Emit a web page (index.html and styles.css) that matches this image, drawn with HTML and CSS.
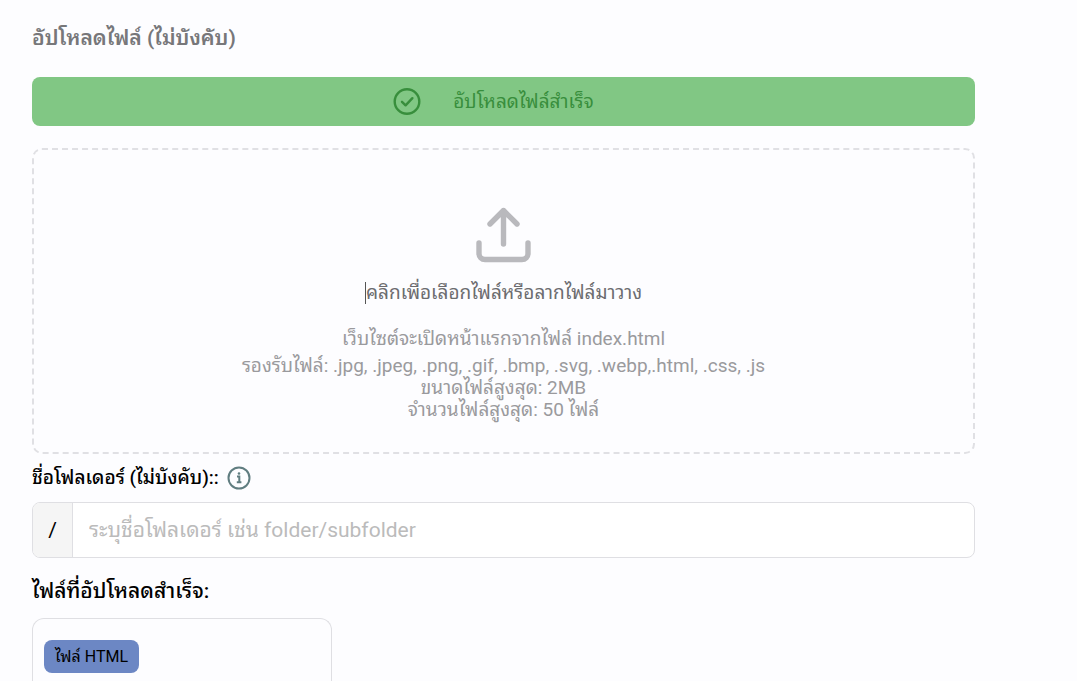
FILE: index.html
```html
<!DOCTYPE html>
<html lang="th">
<head>
  <meta charset="UTF-8">
  <meta name="viewport" content="width=device-width, initial-scale=1.0">
  <title>อัปโหลดไฟล์</title>
  <link rel="stylesheet" href="styles.css">
</head>
<body>
  <main class="upload-page">
    <h1 class="page-title">อัปโหลดไฟล์ (ไม่บังคับ)</h1>

    <div class="success-banner" role="status">
      <svg class="success-icon" viewBox="0 0 28 28" fill="none" stroke="currentColor" stroke-width="2.4" stroke-linecap="round" stroke-linejoin="round" aria-hidden="true">
        <circle cx="14" cy="13.500" r="12.3"/>
        <path d="M9 13.800l3.6 3.5 6.8-7.1"/>
      </svg>
      <span>อัปโหลดไฟล์สำเร็จ</span>
    </div>

    <label class="drop-zone" for="file-input">
      <input type="file" id="file-input" class="file-input" multiple>
      <svg class="upload-icon" viewBox="0 0 56 56" fill="none" stroke="currentColor" stroke-width="5.4" stroke-linecap="round" stroke-linejoin="round" aria-hidden="true">
        <path d="M27.500 37V3.500M14 17l13.500-13.500L41 17M3 36v10.500a6 6 0 0 0 6 6h37a6 6 0 0 0 6-6V36"/>
      </svg>
      <span class="drop-title">คลิกเพื่อเลือกไฟล์หรือลากไฟล์มาวาง</span>
      <span class="drop-hint">เว็บไซต์จะเปิดหน้าแรกจากไฟล์ index.html</span>
      <span class="drop-rules">
        <span>รองรับไฟล์: .jpg, .jpeg, .png, .gif, .bmp, .svg, .webp,.html, .css, .js</span>
        <span>ขนาดไฟล์สูงสุด: 2MB</span>
        <span>จำนวนไฟล์สูงสุด: 50 ไฟล์</span>
      </span>
    </label>

    <div class="folder-label">
      <label for="folder-input">ชื่อโฟลเดอร์ (ไม่บังคับ)::</label>
      <button type="button" class="info-btn" aria-label="ข้อมูลเพิ่มเติม">
        <svg viewBox="0 0 24 24" fill="none" stroke="currentColor" stroke-width="2" aria-hidden="true">
          <circle cx="12" cy="12" r="10.500"/>
          <path d="M10 10.500h2.300V16M9.800 16.300h4.600"/>
          <circle cx="12" cy="7.500" r="1.300" fill="currentColor" stroke="none"/>
        </svg>
      </button>
    </div>

    <div class="folder-group">
      <span class="folder-prefix">/</span>
      <input type="text" id="folder-input" class="folder-input" placeholder="ระบุชื่อโฟลเดอร์ เช่น folder/subfolder">
    </div>

    <h2 class="files-title">ไฟล์ที่อัปโหลดสำเร็จ:</h2>
    <section class="file-card">
      <span class="file-badge">ไฟล์ HTML</span>
    </section>
  </main>
</body>
</html>
```
FILE: styles.css
```css
* {
    box-sizing: border-box;
}

body {
    margin: 0;
    background-color: #fdfdff;
    color: #000;
    font-family: Roboto, "Noto Sans Thai Looped", "Noto Sans", sans-serif;
}

.upload-page {
    display: flex;
    flex-direction: column;
    height: 100vh;
    overflow: hidden;
    padding: 22px 102px 0 32px;
}

.page-title {
    margin: 0 0 23px;
    color: #77777a;
    font-size: 21px;
    line-height: 32px;
    font-weight: 600;
}

.success-banner {
    display: flex;
    flex-shrink: 0;
    justify-content: center;
    align-items: center;
    gap: 32px;
    height: 49px;
    margin-bottom: 22px;
    padding-right: 20px;
    border-radius: 8px;
    background-color: #81c784;
    color: #388e3c;
    font-size: 19px;
    line-height: 22px;
}

.success-icon {
    width: 28px;
    height: 28px;
}

.drop-zone {
    position: relative;
    display: flex;
    flex-shrink: 0;
    flex-direction: column;
    align-items: center;
    padding: 57px 20px 31px;
    border: 2px dashed #e0e0e4;
    border-radius: 10px;
    color: #9a9a9d;
    font-size: 19px;
    line-height: 22px;
    text-align: center;
    cursor: pointer;
}

.file-input {
    position: absolute;
    width: 1px;
    height: 1px;
    opacity: 0;
}

.upload-icon {
    width: 56px;
    height: 56px;
    margin-bottom: 19px;
    color: #b9b9bd;
}

.drop-title {
    margin-bottom: 24px;
    border-left: 1px solid #555;
    color: #6c6c6f;
}

.drop-hint {
    margin-bottom: 5px;
}

.drop-rules {
    display: flex;
    flex-direction: column;
}

.folder-label {
    display: flex;
    align-items: center;
    gap: 8px;
    height: 48px;
    flex-shrink: 0;
    font-size: 19px;
    line-height: 22px;
    font-weight: 500;
}

.info-btn {
    display: flex;
    padding: 0;
    border: none;
    background: none;
    color: #607d80;
    cursor: pointer;
}

.info-btn svg {
    width: 24px;
    height: 24px;
}

.folder-group {
    display: flex;
    flex-shrink: 0;
    height: 56px;
    overflow: hidden;
    border: 1px solid #dfdfe3;
    border-radius: 8px;
    background-color: #fff;
}

.folder-prefix {
    display: flex;
    justify-content: center;
    align-items: center;
    width: 40px;
    border-right: 1px solid #dfdfe3;
    background-color: #f5f5f5;
    font-size: 21px;
}

.folder-input {
    flex: 1;
    min-width: 0;
    padding: 0 16px;
    border: none;
    outline: none;
    background: none;
    font: inherit;
    font-size: 21px;
}

.folder-input::placeholder {
    color: #bbb;
}

.files-title {
    margin: 17px 0 11px;
    font-size: 21px;
    line-height: 32px;
    font-weight: 500;
}

.file-card {
    flex: 1;
    width: 300px;
    max-width: 100%;
    padding: 21px 11px 0;
    border: 1px solid #dfdfe3;
    border-bottom: none;
    border-radius: 12px 12px 0 0;
}

.file-badge {
    display: inline-block;
    padding: 0 11px;
    border-radius: 8px;
    background-color: #6c87c4;
    font-size: 16px;
    line-height: 33px;
}
```
